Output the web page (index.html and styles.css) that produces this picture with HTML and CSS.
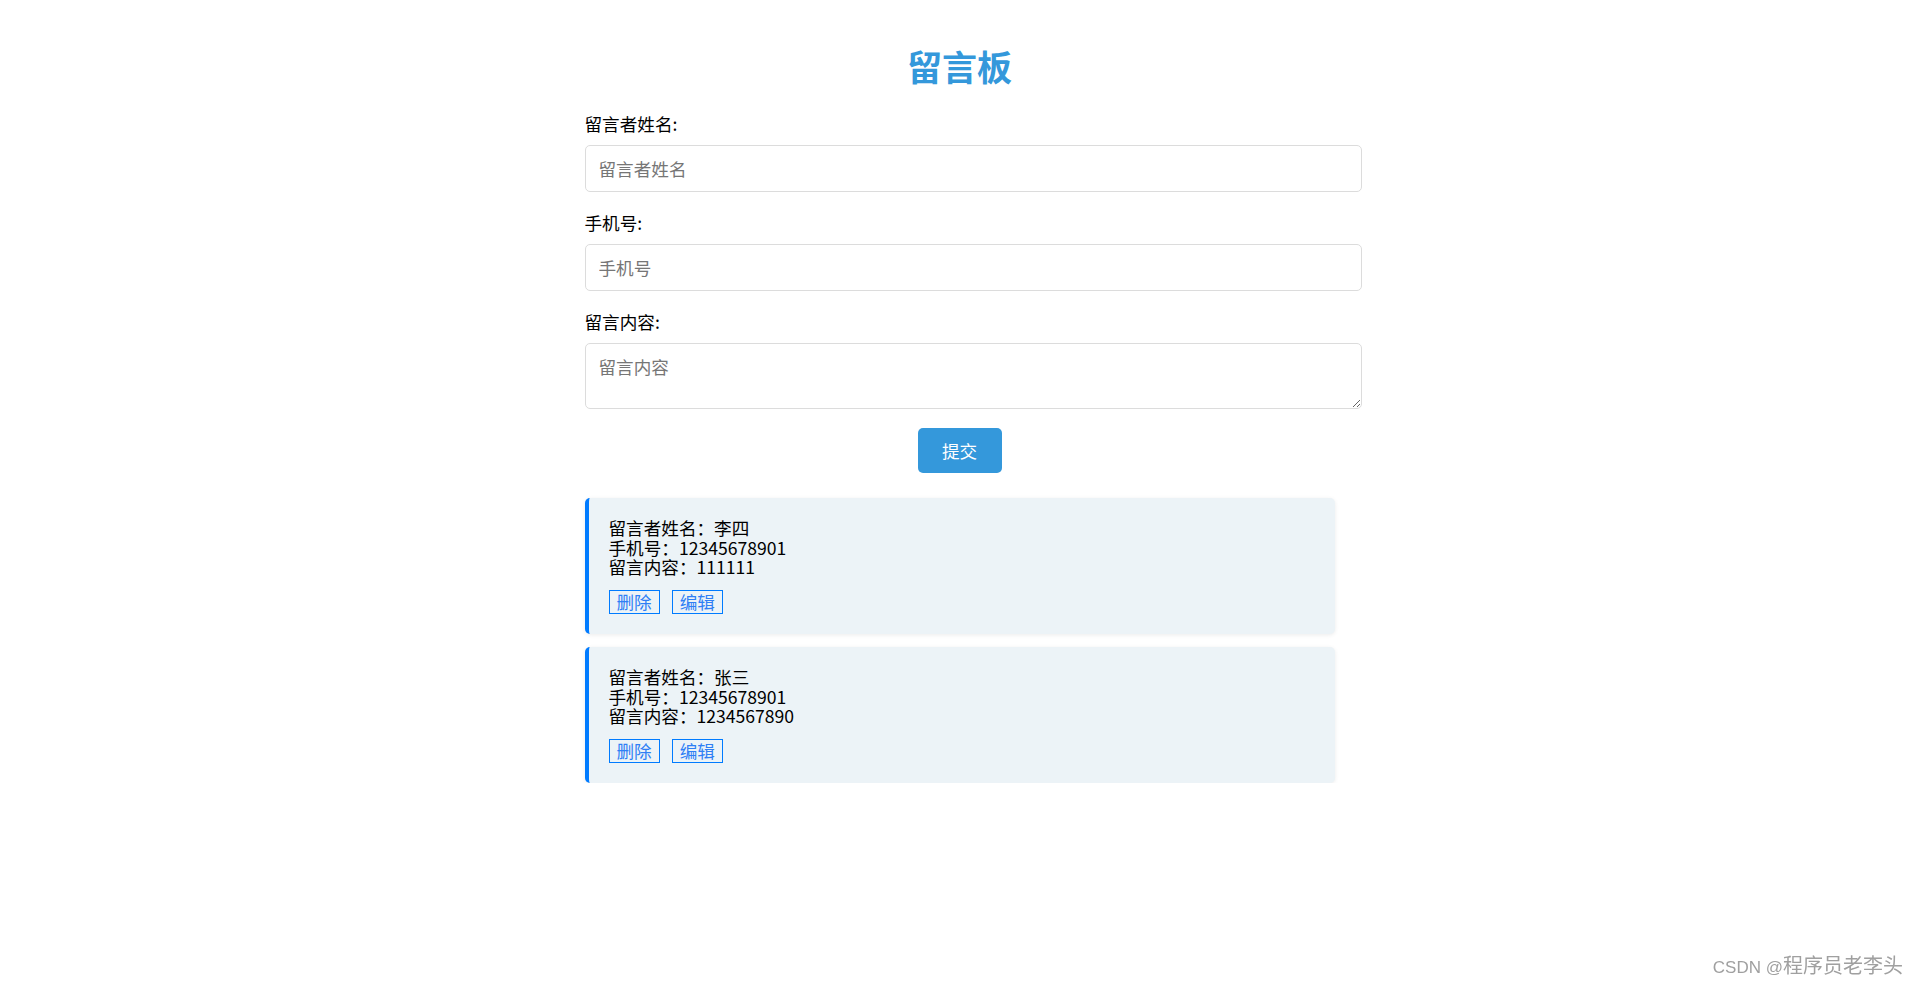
FILE: index.html
```html
<!DOCTYPE html>
<html lang="zh-CN">
<head>
<meta charset="utf-8">
<title>留言板</title>
<link rel="stylesheet" href="styles.css">
</head>
<body>
<div class="board">
  <h1 class="title">留言板</h1>
  <form class="form">
    <div class="group">
      <label class="label" for="name">留言者姓名:</label>
      <input class="field" id="name" type="text" placeholder="留言者姓名">
    </div>
    <div class="group">
      <label class="label" for="phone">手机号:</label>
      <input class="field" id="phone" type="text" placeholder="手机号">
    </div>
    <div class="group group-last">
      <label class="label" for="content">留言内容:</label>
      <textarea class="field area" id="content" placeholder="留言内容"></textarea>
    </div>
    <div class="submit-row"><button class="submit" type="button">提交</button></div>
  </form>
  <div class="list">
    <div class="msg">
      <div class="msg-text">
        <div>留言者姓名：李四</div>
        <div>手机号：12345678901</div>
        <div>留言内容：111111</div>
      </div>
      <div class="msg-actions"><button class="act" type="button">删除</button><button class="act" type="button">编辑</button></div>
    </div>
    <div class="msg">
      <div class="msg-text">
        <div>留言者姓名：张三</div>
        <div>手机号：12345678901</div>
        <div>留言内容：1234567890</div>
      </div>
      <div class="msg-actions"><button class="act" type="button">删除</button><button class="act" type="button">编辑</button></div>
    </div>
  </div>
</div>
<div class="watermark"><span class="wm-latin">CSDN @</span><span class="wm-cjk">程序员老李头</span></div>
</body>
</html>
```
FILE: styles.css
```css
html, body {
  margin: 0;
  padding: 0;
  background: #ffffff;
}
body {
  font-family: "Noto Sans CJK SC", "Noto Sans", sans-serif;
  font-size: 17.6px;
  color: #000;
}
.board {
  width: 750px;
  margin: 0 auto;
  padding-top: 46px;
}
.title {
  margin: 0 0 27px 0;
  text-align: center;
  font-size: 35px;
  line-height: 40px;
  font-weight: 700;
  color: #3498db;
}
.form {
  margin: 0;
}
.group {
  margin-bottom: 20px;
}
.group-last {
  margin-bottom: 19px;
}
.label {
  display: block;
  line-height: 22px;
  margin-bottom: 10px;
  font-weight: 400;
}
.field {
  display: block;
  box-sizing: border-box;
  width: calc(100% + 27px);
  height: 47px;
  margin: 0;
  padding: 0 13px;
  border: 1px solid #dcdcdc;
  border-radius: 5px;
  font-family: inherit;
  font-size: 17.6px;
  line-height: 21px;
  color: #000;
  background: #fff;
  outline: none;
}
.field::placeholder {
  color: #767676;
}
.area {
  height: 66px;
  padding: 12px 13px;
  resize: vertical;
}
.submit-row {
  display: flex;
  justify-content: center;
}
.submit {
  box-sizing: border-box;
  width: 84px;
  height: 45px;
  padding: 0;
  border: none;
  border-radius: 5px;
  background: #3498db;
  color: #fff;
  font-family: inherit;
  font-size: 17.6px;
  line-height: 21px;
}
.list {
  display: flex;
  flex-direction: column;
  gap: 13px;
  margin-top: 25px;
}
.msg {
  box-sizing: border-box;
  height: 136px;
  padding: 20px 20px 19px 20px;
  background: #ecf3f7;
  border-left: 4px solid #007bff;
  border-radius: 5px;
  box-shadow: 0 1px 4px rgba(0, 0, 0, 0.08);
}
.msg-text {
  line-height: 19.6px;
}
.msg-actions {
  display: flex;
  gap: 12px;
  margin-top: 13px;
}
.act {
  box-sizing: border-box;
  height: 24px;
  padding: 0 7px;
  border: 1px solid #007bff;
  border-radius: 0;
  background: transparent;
  color: #2f7ff5;
  font-family: inherit;
  font-size: 17.6px;
  line-height: 20px;
}
.watermark {
  position: fixed;
  right: 16px;
  bottom: 6px;
  color: #a0a0a0;
  line-height: 24px;
}
.wm-latin {
  font-family: "Liberation Sans", sans-serif;
  font-size: 17px;
}
.wm-cjk {
  font-family: "Noto Sans CJK SC", sans-serif;
  font-size: 20px;
}
```
